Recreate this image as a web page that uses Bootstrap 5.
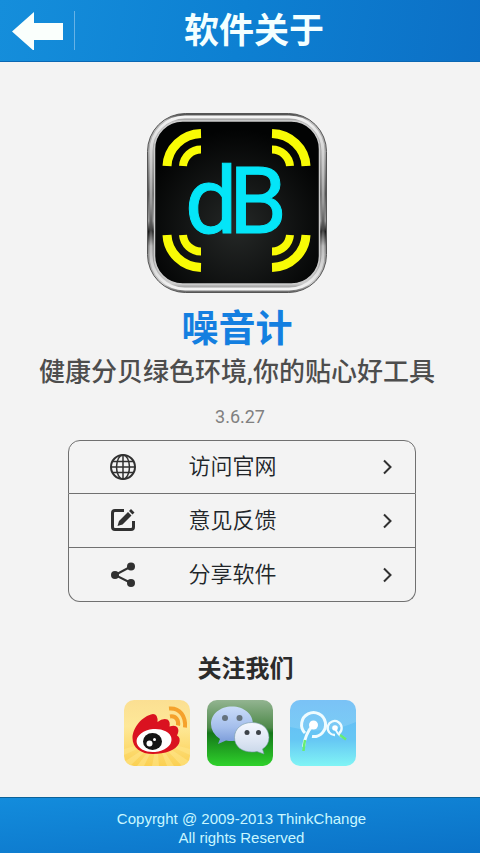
<!DOCTYPE html>
<html lang="zh-CN">
<head>
<meta charset="utf-8">
<meta name="viewport" content="width=device-width, initial-scale=1">
<title>软件关于</title>
<link href="https://cdn.jsdelivr.net/npm/bootstrap@5.3.0/dist/css/bootstrap.min.css" rel="stylesheet">
<style>
body { background: #f3f3f3; font-family: Roboto, "Noto Sans CJK SC", sans-serif; }
.top-bar { height: 62px; padding-right: 47px; background: linear-gradient(100deg, #158edb, #0d80d2 50%, #0c70c6); border-bottom: 1px solid #0a67b3; }
.back-btn { width: 75px; height: 39px; padding: 0 0 0 12px; border: 0; border-right: 1px solid #66b2e6; border-radius: 0; }
.page-title { font-size: 35px; line-height: 40px; font-weight: 700; color: #f4ffff; padding-top: 3px; }
.about { padding-top: 50px; }
.app-intro { padding-right: 6px; }
.app-name { font-size: 37px; line-height: 44px; font-weight: 700; color: #147fe0; margin-top: 14px; }
.tagline { font-size: 26px; line-height: 40px; font-weight: 500; color: #4d4d4d; white-space: nowrap; }
.version { font-size: 18px; line-height: 20px; font-weight: 400; color: #808080; margin: 15px 0 13px; }
.menu-wrap { padding-left: 3px; }
.about-menu { width: 348px; max-width: 92%; --bs-list-group-bg: transparent; --bs-list-group-border-color: #707070; --bs-list-group-border-radius: 12px; --bs-list-group-action-color: #3c3c3c; }
.about-menu .list-group-item { height: 54px; padding: 0 20px 0 40px; font-size: 22px; line-height: 30px; font-weight: 350; }
.menu-label { padding-left: 52px; }
.follow-title { font-size: 24px; line-height: 30px; font-weight: 700; color: #2b2b2b; margin: 52px 0 16px; padding-left: 11px; }
.socials { gap: 17px; padding-left: 0; }
.legal { background: linear-gradient(175deg, #138cdc, #0b72c7); border-top: 1px solid #0b6299; color: #c9f7ff; font: 15px/19px "Liberation Sans", Arial, sans-serif; padding: 11px 0 6px 3px; }
</style>
<script src="https://cdn.jsdelivr.net/npm/bootstrap@5.3.0/dist/js/bootstrap.bundle.min.js"></script>
</head>
<body class="d-flex flex-column min-vh-100">
<header class="top-bar d-flex align-items-center">
  <button type="button" class="btn back-btn d-flex align-items-center" aria-label="返回">
    <svg width="52" height="39" viewBox="0 0 52 39"><path d="M0 20.500 22 1v11h29v17H22v11z" fill="#fafffc"/></svg>
  </button>
  <h1 class="page-title flex-grow-1 text-center mb-0">软件关于</h1>
</header>

<main class="about flex-grow-1 d-flex flex-column align-items-center">
  <div class="app-intro d-flex flex-column align-items-center">
  <svg width="182" height="182" viewBox="0 0 182 182" role="img" aria-label="dB">
    <defs>
      <linearGradient id="rim" x1="0" y1="0" x2="0" y2="1">
        <stop offset="0" stop-color="#444"/><stop offset=".04" stop-color="#bbb"/><stop offset=".2" stop-color="#aaa"/><stop offset=".45" stop-color="#555"/><stop offset=".6" stop-color="#999"/><stop offset=".66" stop-color="#181818"/><stop offset=".74" stop-color="#888"/><stop offset=".95" stop-color="#ccc"/><stop offset="1" stop-color="#666"/>
      </linearGradient>
      <linearGradient id="rimIn" x1="0" y1="0" x2="0" y2="1">
        <stop offset="0" stop-color="#f4f4f4"/><stop offset=".3" stop-color="#c4c4c4"/><stop offset=".5" stop-color="#999"/><stop offset=".66" stop-color="#444"/><stop offset=".75" stop-color="#bbb"/><stop offset="1" stop-color="#f4f4f4"/>
      </linearGradient>
      <radialGradient id="face" cy=".65" r=".6"><stop offset="0" stop-color="#252827"/><stop offset="1" stop-color="#020303"/></radialGradient>
      <g id="wave" fill="none" stroke="#f8fb05"><path d="M21 54A35 34 0 0 1 55 21.500" stroke-width="9"/><path d="M37 54A18 18 0 0 1 55 37.500" stroke-width="8"/></g>
    </defs>
    <rect x="1.500" y="1.500" width="179" height="179" rx="38" fill="url(#rim)" stroke="#555" stroke-width="1"/>
    <rect x="5" y="5" width="172" height="172" rx="34" fill="none" stroke="url(#rimIn)" stroke-width="3"/>
    <rect x="8.500" y="9" width="165" height="163" rx="28" fill="url(#face)" stroke="#ccc" stroke-width="1.500"/>
    <use href="#wave"/>
    <use href="#wave" transform="translate(181 0) scale(-1 1)"/>
    <use href="#wave" transform="translate(0 177) scale(1 -1)"/>
    <use href="#wave" transform="translate(181 177) scale(-1 -1)"/>
    <text x="39 83" y="121" font-family="Roboto, sans-serif" font-size="93" font-weight="400" fill="#04e5f8" stroke="#04e5f8" stroke-width="1">dB</text>
  </svg>
  <h2 class="app-name mb-0">噪音计</h2>
  <p class="tagline mb-0">健康分贝绿色环境,你的贴心好工具</p>
  </div>
  <p class="version">3.6.27</p>

  <div class="menu-wrap w-100 d-flex justify-content-center">
  <nav class="list-group about-menu" aria-label="软件关于">
    <a href="#site" class="list-group-item list-group-item-action d-flex align-items-center">
      <svg width="28" height="28" viewBox="0 0 28 28" fill="none" stroke="#303030" stroke-width="1.500"><circle cx="14" cy="14" r="12" stroke-width="2"/><ellipse cx="14" cy="14" rx="6.500" ry="12"/><path d="M14 2v24M2 14h24M4 8.500h20M4 19.500h20"/></svg>
      <span class="menu-label flex-grow-1">访问官网</span>
      <svg width="16" height="18" viewBox="0 0 16 18"><path d="m5 2.500 6.500 6.500L5 15.500" fill="none" stroke="#303030" stroke-width="2"/></svg>
    </a>
    <a href="#feedback" class="list-group-item list-group-item-action d-flex align-items-center">
      <svg width="28" height="28" viewBox="0 0 28 28"><path d="M15 3.500H6Q3.500 3.500 3.500 6v14Q3.500 22.500 6 22.500h16q2.500 0 2.500-2.500v-6" fill="none" stroke="#303030" stroke-width="3"/><path d="m8.500 19 1.500-5L19 5l3.500 3.500-9 9zM20 4l2-2 3.500 3.500-2 2z" fill="#303030"/></svg>
      <span class="menu-label flex-grow-1">意见反馈</span>
      <svg width="16" height="18" viewBox="0 0 16 18"><path d="m5 2.500 6.500 6.500L5 15.500" fill="none" stroke="#303030" stroke-width="2"/></svg>
    </a>
    <a href="#share" class="list-group-item list-group-item-action d-flex align-items-center">
      <svg width="28" height="28" viewBox="0 0 28 28" fill="#303030"><path d="M22 5.500 6 14l16 8" fill="none" stroke="#303030" stroke-width="2"/><circle cx="22" cy="5.500" r="4"/><circle cx="6" cy="14" r="4"/><circle cx="22" cy="22" r="4"/></svg>
      <span class="menu-label flex-grow-1">分享软件</span>
      <svg width="16" height="18" viewBox="0 0 16 18"><path d="m5 2.500 6.500 6.500L5 15.500" fill="none" stroke="#303030" stroke-width="2"/></svg>
    </a>
  </nav>
  </div>

  <h3 class="follow-title">关注我们</h3>
  <div class="socials d-flex pb-4">
    <a href="#weibo" aria-label="微博"><svg class="d-block" width="66" height="66" viewBox="0 0 66 66">
      <defs><linearGradient id="wb" x1="0" y1="0" x2="0" y2="1"><stop offset="0" stop-color="#fbdf92"/><stop offset=".4" stop-color="#fee898"/><stop offset="1" stop-color="#fbd052"/></linearGradient><clipPath id="tile"><rect width="66" height="66" rx="10"/></clipPath></defs>
      <g clip-path="url(#tile)"><rect width="66" height="66" fill="url(#wb)"/>
      <path d="M33 40 0 49v6zM33 40 0 62v4h6zM33 40 13 66h7zM33 40 28 66h7zM33 40 43 66h7zM33 40 58 66h8v-4zM33 40 66 49v6z" fill="#ffe88d" opacity=".5"/></g>
      <path d="M8.500 38C8.500 28 18 16 29 14q5 0 4.500 8 5-4 10-2.500 3 2 2 7 6-2 8 1 2 3-.5 8 4 2 2 8C52 50 41 54 29 54 17 54 8.500 48 8.500 38z" fill="#da1220"/>
      <ellipse cx="30" cy="40.500" rx="17.500" ry="11.500" fill="#fff" transform="rotate(-5 30 40)"/>
      <ellipse cx="28.500" cy="41.500" rx="9.500" ry="8.500" fill="#151515"/><circle cx="25.500" cy="43.500" r="3" fill="#fff"/><circle cx="30.500" cy="39.500" r="1.500" fill="#fff"/>
      <g fill="none" stroke="#f5a12c" stroke-width="4"><path d="M45 8.500c11-1 17 8 16 19"/><path d="M46 16.500c6-1 9 4 8 9"/></g>
    </svg></a>
    <a href="#wechat" aria-label="微信"><svg class="d-block" width="66" height="66" viewBox="0 0 66 66">
      <defs><linearGradient id="wx" x1="0" y1="0" x2="0" y2="1"><stop offset="0" stop-color="#93b491"/><stop offset=".42" stop-color="#4d8949"/><stop offset=".5" stop-color="#147719"/><stop offset="1" stop-color="#2fd22b"/></linearGradient><linearGradient id="bubble" x1="0" y1="0" x2="0" y2="1"><stop offset="0" stop-color="#cadcf9"/><stop offset=".55" stop-color="#a5bfec"/><stop offset="1" stop-color="#7798d7"/></linearGradient><linearGradient id="bubbleLight" x1="0" y1="0" x2="0" y2="1"><stop offset="0" stop-color="#f5f8ff"/><stop offset=".6" stop-color="#dce5f3"/><stop offset="1" stop-color="#c8d6e8"/></linearGradient></defs>
      <rect width="66" height="66" rx="10" fill="url(#wx)"/>
      <path d="M25 6.500C13 6.500 4 14 4 24q0 9 9 15l-2 5 8-3.500q3 .5 6 .5c12 0 21-7 21-17S37 6.500 25 6.500z" fill="url(#bubble)"/>
      <path d="M45 22.500c-10 0-17.500 6-17.500 15S35 52 45 52q3 0 5-.5l7 2.500-1.500-5Q62 45 62 37.500c0-9-7-15-17-15z" fill="url(#bubbleLight)" stroke="#7399a5" stroke-width=".6"/>
      <g fill="#65727d"><circle cx="18" cy="18" r="3"/><circle cx="32.500" cy="18" r="3"/></g><g fill="#3d4348"><circle cx="40" cy="32.500" r="2.500"/><circle cx="51.500" cy="32.500" r="2.500"/></g>
    </svg></a>
    <a href="#tencent-weibo" aria-label="腾讯微博"><svg class="d-block" width="66" height="66" viewBox="0 0 66 66">
      <defs><linearGradient id="tw" x1="0" y1="0" x2="0" y2="1"><stop offset="0" stop-color="#65b9f5"/><stop offset=".6" stop-color="#66c7f4"/><stop offset="1" stop-color="#80f4f5"/></linearGradient></defs>
      <rect width="66" height="66" rx="10" fill="url(#tw)"/>
      <path d="M0 10Q0 0 10 0h46q10 0 10 10v12Q34 36 0 27z" fill="#fff" opacity=".14"/>
      <g fill="none" stroke="#effcff"><path d="M15 33A12 12 0 1 1 22 36.500" stroke-width="3"/><path d="M23 25Q15 34 13.500 47" stroke-width="3"/><path d="M49 33.500A7 7 0 1 0 45 35" stroke-width="2.300"/><path d="M45 28q2 6 7 9" stroke-width="2"/></g>
      <path d="M15 40q-1 5-1.500 11M50 35l6 4.500" fill="none" stroke="#66ed74" stroke-width="2.500"/>
      <circle cx="23.500" cy="25" r="4.500" fill="#fff"/><circle cx="45" cy="28" r="2.800" fill="#fff"/>
    </svg></a>
  </div>
</main>

<footer class="legal text-center">
  <div>Copyrght @ 2009-2013 ThinkChange</div>
  <div>All rights Reserved</div>
</footer>
</body>
</html>
